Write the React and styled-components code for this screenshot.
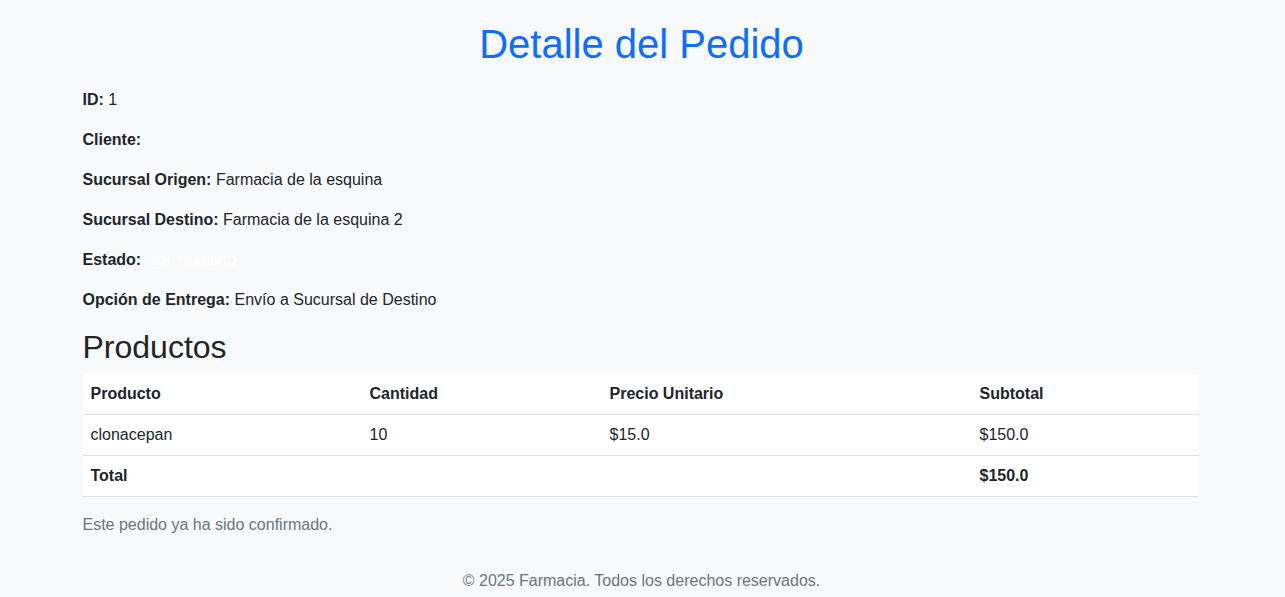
import styled, { createGlobalStyle } from 'styled-components';

const GlobalStyle = createGlobalStyle`
  html, body {
    margin: 0;
    padding: 0;
    background-color: #f8f9fa;
    font-family: "Liberation Sans", Arial, Helvetica, sans-serif;
    font-size: 16px;
    line-height: 1.5;
    color: #212529;
  }
  * {
    box-sizing: border-box;
  }
`;

const TopShade = styled.div`
  height: 0;
  box-shadow: 0 1px 4px rgba(0, 0, 0, 0.12);
`;

const Container = styled.main`
  max-width: 1116px;
  margin: 0 auto;
  position: relative;
  left: -2px;
`;

const Title = styled.h1`
  margin: 20px 0 20px;
  font-size: 40px;
  font-weight: 400;
  line-height: 1.2;
  text-align: center;
  color: #0d6efd;
  position: relative;
  left: 1px;
`;

const Field = styled.p`
  margin: 0 0 16px;
`;

const Label = styled.strong`
  font-weight: 700;
`;

const Badge = styled.span`
  display: inline-block;
  margin-left: 4px;
  padding: 0.35em 0.65em;
  font-size: 0.75em;
  font-weight: 700;
  line-height: 1;
  color: #fff;
  vertical-align: baseline;
`;

const SectionTitle = styled.h2`
  margin: 0 0 8px;
  font-size: 32px;
  font-weight: 400;
  line-height: 1.2;
`;

const Table = styled.table`
  width: 100%;
  margin-bottom: 16px;
  border-collapse: collapse;
  background-color: #fff;
  table-layout: fixed;
`;

const Th = styled.th`
  width: ${({ w }) => w};
  padding: 8px;
  text-align: left;
  font-weight: 700;
  border-bottom: 1px solid #dee2e6;
`;

const Td = styled.td`
  padding: 8px;
  font-weight: ${({ bold }) => (bold ? 700 : 400)};
  border-bottom: 1px solid #dee2e6;
`;

const Note = styled.p`
  margin: 0;
  color: #6c757d;
`;

const Footer = styled.footer`
  margin-top: 32px;
  padding-bottom: 16px;
  text-align: center;
  color: #6c757d;
  position: relative;
  left: 1px;
`;

const pedido = {
  id: 1,
  cliente: '',
  origen: 'Farmacia de la esquina',
  destino: 'Farmacia de la esquina 2',
  estado: 'EN_TRANSITO',
  entrega: 'Envío a Sucursal de Destino',
  items: [{ producto: 'clonacepan', cantidad: 10, precio: '$15.0', subtotal: '$150.0' }],
  total: '$150.0',
};

const App = () => {
  return (
    <>
      <GlobalStyle />
      <TopShade />
      <Container>
        <Title>Detalle del Pedido</Title>
        <Field><Label>ID:</Label> {pedido.id}</Field>
        <Field><Label>Cliente:</Label> {pedido.cliente}</Field>
        <Field><Label>Sucursal Origen:</Label> {pedido.origen}</Field>
        <Field><Label>Sucursal Destino:</Label> {pedido.destino}</Field>
        <Field><Label>Estado:</Label><Badge>{pedido.estado}</Badge></Field>
        <Field><Label>Opción de Entrega:</Label> {pedido.entrega}</Field>

        <SectionTitle>Productos</SectionTitle>
        <Table>
          <thead>
            <tr>
              <Th w="279px">Producto</Th>
              <Th w="240px">Cantidad</Th>
              <Th w="370px">Precio Unitario</Th>
              <Th>Subtotal</Th>
            </tr>
          </thead>
          <tbody>
            {pedido.items.map((item) => (
              <tr key={item.producto}>
                <Td>{item.producto}</Td>
                <Td>{item.cantidad}</Td>
                <Td>{item.precio}</Td>
                <Td>{item.subtotal}</Td>
              </tr>
            ))}
            <tr>
              <Td bold colSpan={3}>Total</Td>
              <Td bold>{pedido.total}</Td>
            </tr>
          </tbody>
        </Table>

        <Note>Este pedido ya ha sido confirmado.</Note>
        <Footer>© 2025 Farmacia. Todos los derechos reservados.</Footer>
      </Container>
    </>
  );
};

export default App;
